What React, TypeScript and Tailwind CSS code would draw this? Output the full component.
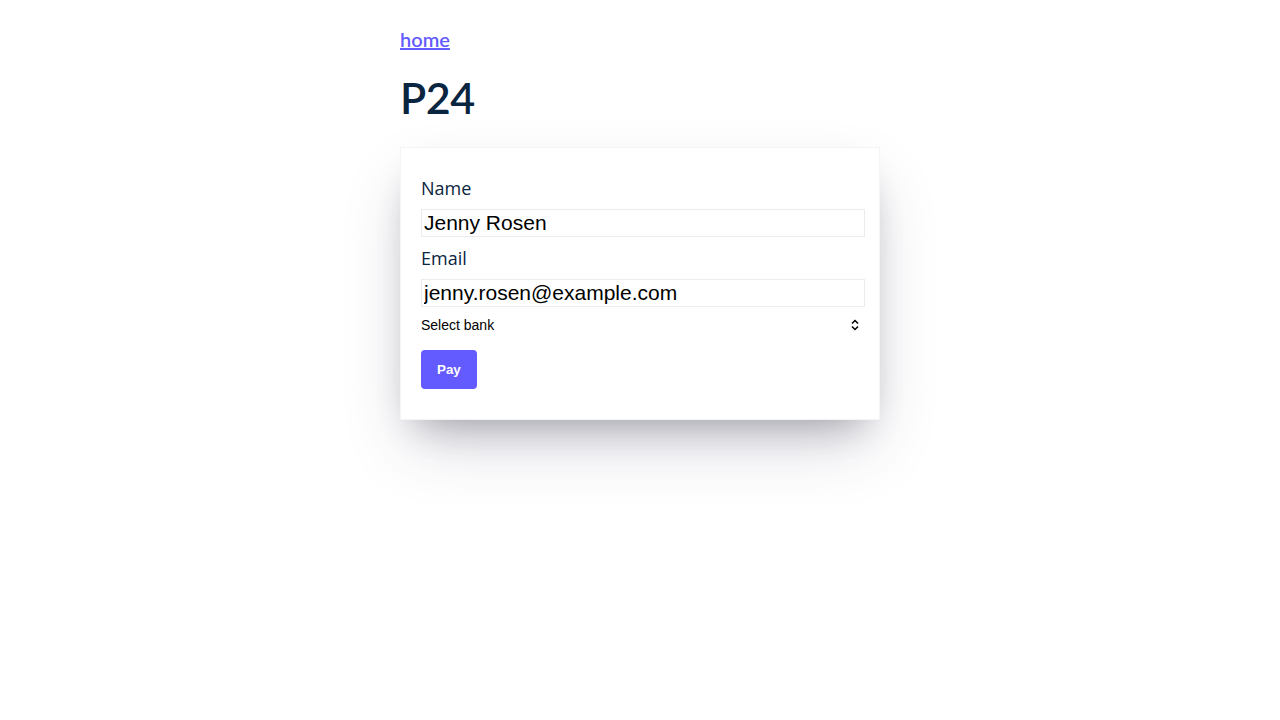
import React from "react";

export default function App() {
  return (
    <div className="min-h-[720px] bg-white font-['Open_Sans',Lato,sans-serif]">
      <div className="w-[480px] mx-auto pt-[27px] flex flex-col">
        <a
          href="#"
          className="w-fit text-[20px] leading-[24px] font-semibold text-[#635bff] underline font-['Lato',sans-serif]"
        >
          home
        </a>
        <h1 className="mt-[21px] text-[43px] leading-[52px] font-semibold text-[#0a2540] tracking-[-0.5px] font-['Lato',sans-serif]">
          P24
        </h1>
        <form
          className="mt-[23px] flex flex-col border border-[#f4f4f4] bg-white p-[20px] shadow-[0_30px_60px_-12px_rgba(50,50,93,0.25),0_18px_36px_-18px_rgba(0,0,0,0.3)]"
          onSubmit={(e) => e.preventDefault()}
        >
          <label className="mt-[8px] text-[18px] leading-[24px] font-normal text-[#0a2540]">Name</label>
          <input
            defaultValue="Jenny Rosen"
            className="w-[444px] mt-[9px] h-[28px] border border-[#ececec] px-[2px] text-[21px] text-black outline-none font-['Liberation_Sans',Arial,sans-serif]"
          />
          <label className="mt-[9px] text-[18px] leading-[24px] font-normal text-[#0a2540]">Email</label>
          <input
            defaultValue="jenny.rosen@example.com"
            className="w-[444px] mt-[9px] h-[28px] border border-[#ececec] px-[2px] text-[21px] text-black outline-none font-['Liberation_Sans',Arial,sans-serif]"
          />
          <div className="relative mt-[9px] w-[444px] h-[18px]">
            <select className="block w-full h-[18px] appearance-none bg-white text-[14px] leading-[18px] text-black outline-none font-['Liberation_Sans',Arial,sans-serif]">
              <option>Select bank</option>
            </select>
            <svg
              className="absolute right-[6px] top-[3px] pointer-events-none"
              width="8"
              height="12"
              viewBox="0 0 8 12"
              fill="none"
              stroke="black"
              strokeWidth="1.5"
            >
              <path d="M1 4.5 L4 1.5 L7 4.5" />
              <path d="M1 7.5 L4 10.5 L7 7.5" />
            </svg>
          </div>
          <button
            type="submit"
            className="w-fit mt-[16px] mb-[10px] rounded-[4px] bg-[#635bff] px-[16px] py-[12px] text-[13.33px] leading-[15px] font-bold text-white font-['Liberation_Sans',Arial,sans-serif]"
          >
            Pay
          </button>
        </form>
      </div>
    </div>
  );
}
